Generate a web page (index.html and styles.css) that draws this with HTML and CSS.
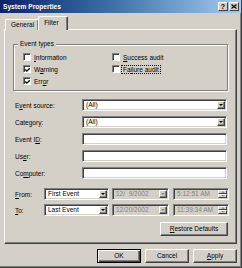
FILE: index.html
```html
<!DOCTYPE html>
<html>
<head>
<meta charset="utf-8">
<link rel="stylesheet" href="styles.css">
</head>
<body>
<div class="window">
  <div class="titlebar">
    <span class="title">System Properties</span>
    <div class="tb-btns">
      <span class="tbb">?</span>
      <span class="tbb">
        <svg width="6" height="5" viewBox="0 0 6 5"><path d="M0.5 0.5 L5.5 4.5 M5.5 0.5 L0.5 4.5" stroke="#000" stroke-width="1.2"/></svg>
      </span>
    </div>
  </div>
  <div class="content">
    <div class="tabs">
      <div class="tab">General</div>
      <div class="tab active">Filter</div>
    </div>
    <div class="panel">
      <div class="group">
        <span class="legend">Event types</span>
        <div class="checks">
          <label class="check"><span class="box"></span><span><u>I</u>nformation</span></label>
          <label class="check"><span class="box"></span><span><u>S</u>uccess audit</span></label>
          <label class="check"><span class="box checked"><svg width="6" height="6" viewBox="0 0 6 6"><path d="M0.3 2.4 L2.2 4.4 L5.7 0.9" stroke="#000" stroke-width="1.5" fill="none"/></svg></span><span>W<u>a</u>rning</span></label>
          <label class="check"><span class="box"></span><span class="focus">Fa<u>i</u>lure audit</span></label>
          <label class="check"><span class="box checked"><svg width="6" height="6" viewBox="0 0 6 6"><path d="M0.3 2.4 L2.2 4.4 L5.7 0.9" stroke="#000" stroke-width="1.5" fill="none"/></svg></span><span>Err<u>o</u>r</span></label>
        </div>
      </div>
      <div class="form">
        <div class="row"><span class="lbl">E<u>v</u>ent source:</span><div class="combo"><span class="val">(All)</span><span class="drop"><i class="arrow"></i></span></div></div>
        <div class="row"><span class="lbl">Categor<u>y</u>:</span><div class="combo"><span class="val">(All)</span><span class="drop"><i class="arrow"></i></span></div></div>
        <div class="row"><span class="lbl">Event I<u>D</u>:</span><div class="edit"></div></div>
        <div class="row"><span class="lbl">Us<u>e</u>r:</span><div class="edit"></div></div>
        <div class="row"><span class="lbl">Co<u>m</u>puter:</span><div class="edit"></div></div>
        <div class="row dates first">
          <span class="lbl"><u>F</u>rom:</span>
          <div class="combo sm"><span class="val">First Event</span><span class="drop"><i class="arrow"></i></span></div>
          <div class="combo dis date"><span class="val">12/&nbsp; 9/2002</span><span class="drop"><i class="arrow"></i></span></div>
          <div class="combo dis time"><span class="val">5:12:51 AM</span><span class="spin"><span class="sp"><i class="up"></i></span><span class="sp"><i class="arrow"></i></span></span></div>
        </div>
        <div class="row dates">
          <span class="lbl"><u>T</u>o:</span>
          <div class="combo sm"><span class="val">Last Event</span><span class="drop"><i class="arrow"></i></span></div>
          <div class="combo dis date"><span class="val">12/20/2002</span><span class="drop"><i class="arrow"></i></span></div>
          <div class="combo dis time"><span class="val">11:39:34 AM</span><span class="spin"><span class="sp"><i class="up"></i></span><span class="sp"><i class="arrow"></i></span></span></div>
        </div>
      </div>
      <div class="restore-row"><button class="btn restore"><u>R</u>estore Defaults</button></div>
    </div>
    <div class="buttons">
      <button class="btn def">OK</button>
      <button class="btn">Cancel</button>
      <button class="btn"><u>A</u>pply</button>
    </div>
  </div>
</div>
</body>
</html>
```
FILE: styles.css
```css
* { box-sizing: border-box; }
html, body { margin: 0; padding: 0; }
body {
  width: 242px;
  height: 268px;
  overflow: hidden;
  background: #d4d0c8;
  font-family: "Liberation Sans", Arial, sans-serif;
  font-size: 6.5px;
  color: #000;
}
u { text-decoration: underline; text-underline-offset: 1px; }

.window {
  width: 242px;
  height: 268px;
  background: #d4d0c8;
  border-right: 1px solid #404040;
  border-bottom: 1px solid #404040;
  box-shadow: inset -1px -1px #808080;
  display: flex;
  flex-direction: column;
}

.titlebar {
  height: 13px;
  flex: none;
  background: linear-gradient(to right, #0a246a 0%, #3a6ea5 45%, #a6caf0 100%);
  display: flex;
  align-items: center;
  justify-content: space-between;
  padding: 0 2px 0 3px;
}
.title { color: #fff; font-weight: bold; font-size: 6.6px; }
.tb-btns { display: flex; gap: 1px; }
.tbb {
  width: 10px;
  height: 9px;
  background: #d4d0c8;
  border: 1px solid;
  border-color: #fff #404040 #404040 #fff;
  display: flex;
  align-items: center;
  justify-content: center;
  font-weight: bold;
  font-size: 7px;
  line-height: 7px;
}

.content {
  flex: 1;
  display: flex;
  flex-direction: column;
  padding: 3px 4px 0 4px;
}

.tabs {
  display: flex;
  align-items: flex-end;
  height: 14px;
  margin-bottom: -1px;
  padding-left: 1px;
  position: relative;
  z-index: 1;
}
.tab {
  height: 11px;
  padding: 0 4px 0 5px;
  line-height: 9px;
  white-space: nowrap;
  border: 1px solid;
  border-color: #fff #404040 transparent #fff;
  border-bottom: none;
  border-radius: 2px 2px 0 0;
  background: #d4d0c8;
  box-shadow: inset -1px 0 #808080;
}
.tab.active {
  height: 14px;
  margin-left: -1px;
  padding: 0 8px 0 5px;
  line-height: 11px;
}

.panel {
  flex: none;
  height: 215px;
  border: 1px solid;
  border-color: #fff #404040 #404040 #fff;
  box-shadow: inset -1px -1px #808080;
  padding: 0 8px 0 8px;
  display: flex;
  flex-direction: column;
}

.group {
  margin-top: 14px;
  height: 47px;
  border: 1px solid #808080;
  box-shadow: inset 1px 1px #fff, 1px 1px #fff;
  padding: 0 0 0 9px;
}
.legend {
  display: block;
  width: fit-content;
  height: 8px;
  line-height: 8px;
  margin: -5px 0 0 -5px;
  padding: 0 2px;
  background: #d4d0c8;
}
.checks {
  margin-top: 3px;
  display: grid;
  grid-template-columns: 89px auto;
  grid-auto-rows: 12px;
}
.check { display: flex; align-items: center; gap: 3px; }
.box {
  width: 8px;
  height: 8px;
  flex: none;
  background: #fff;
  border: 1px solid;
  border-color: #808080 #fff #fff #808080;
  box-shadow: inset 1px 1px #404040;
  display: flex;
  align-items: center;
  justify-content: center;
}
.box svg { display: block; margin: 1px 0 0 1px; }
.focus { outline: 1px dotted #000; outline-offset: 0; padding: 0 1px; margin-left: -1px; }

.form {
  margin: 8px 1px 0 2px;
  display: flex;
  flex-direction: column;
  gap: 5px;
}
.row {
  display: grid;
  grid-template-columns: 67px 1fr;
  height: 12px;
  align-items: center;
}
.row.dates { grid-template-columns: 26px 65px 57px 57px; column-gap: 3px; }
.row.dates .time { margin-left: 1px; }
.row.first { margin-top: 4px; }
.row.dates + .row.dates { margin-top: -1px; }

.combo, .edit {
  height: 12px;
  background: #fff;
  border: 1px solid;
  border-color: #808080 #fff #fff #808080;
  box-shadow: inset 1px 1px #404040, inset -1px -1px #d4d0c8;
  display: flex;
  align-items: center;
  padding: 0 1px 0 3px;
}
.combo .val { flex: 1; white-space: nowrap; overflow: hidden; line-height: 8px; }
.drop {
  width: 8px;
  height: 8px;
  flex: none;
  background: #d4d0c8;
  border: 1px solid;
  border-color: #fff #404040 #404040 #fff;
  box-shadow: inset -1px -1px #808080;
  display: flex;
  align-items: center;
  justify-content: center;
}
.arrow {
  width: 0;
  height: 0;
  border-left: 2px solid transparent;
  border-right: 2px solid transparent;
  border-top: 2px solid #000;
}
.up {
  width: 0;
  height: 0;
  border-left: 2px solid transparent;
  border-right: 2px solid transparent;
  border-bottom: 2px solid #000;
}
.combo.dis { background: #d4d0c8; color: #808080; }
.combo.dis .arrow { border-top-color: #808080; }
.combo.dis .up { border-bottom-color: #808080; }
.spin { display: flex; flex-direction: column; width: 9px; height: 8px; flex: none; }
.sp {
  flex: 1;
  background: #d4d0c8;
  border: 1px solid;
  border-color: #fff #404040 #404040 #fff;
  display: flex;
  align-items: center;
  justify-content: center;
}
.sp i { transform: scale(0.8); }

.restore-row {
  margin-top: 6px;
  display: flex;
  justify-content: flex-end;
}
.btn {
  height: 14px;
  width: 44px;
  padding: 0;
  font: inherit;
  color: #000;
  background: #d4d0c8;
  border: 1px solid;
  border-color: #fff #404040 #404040 #fff;
  box-shadow: inset -1px -1px #808080;
  line-height: 10px;
  text-align: center;
}
.btn.restore { width: 68px; }
.btn.def {
  border: 1px solid #000;
  box-shadow: inset 1px 1px #fff, inset -1px -1px #404040, inset -2px -2px #808080;
}
.buttons {
  margin-top: 5px;
  display: flex;
  justify-content: flex-end;
  gap: 4px;
  padding-right: 0;
}
```
